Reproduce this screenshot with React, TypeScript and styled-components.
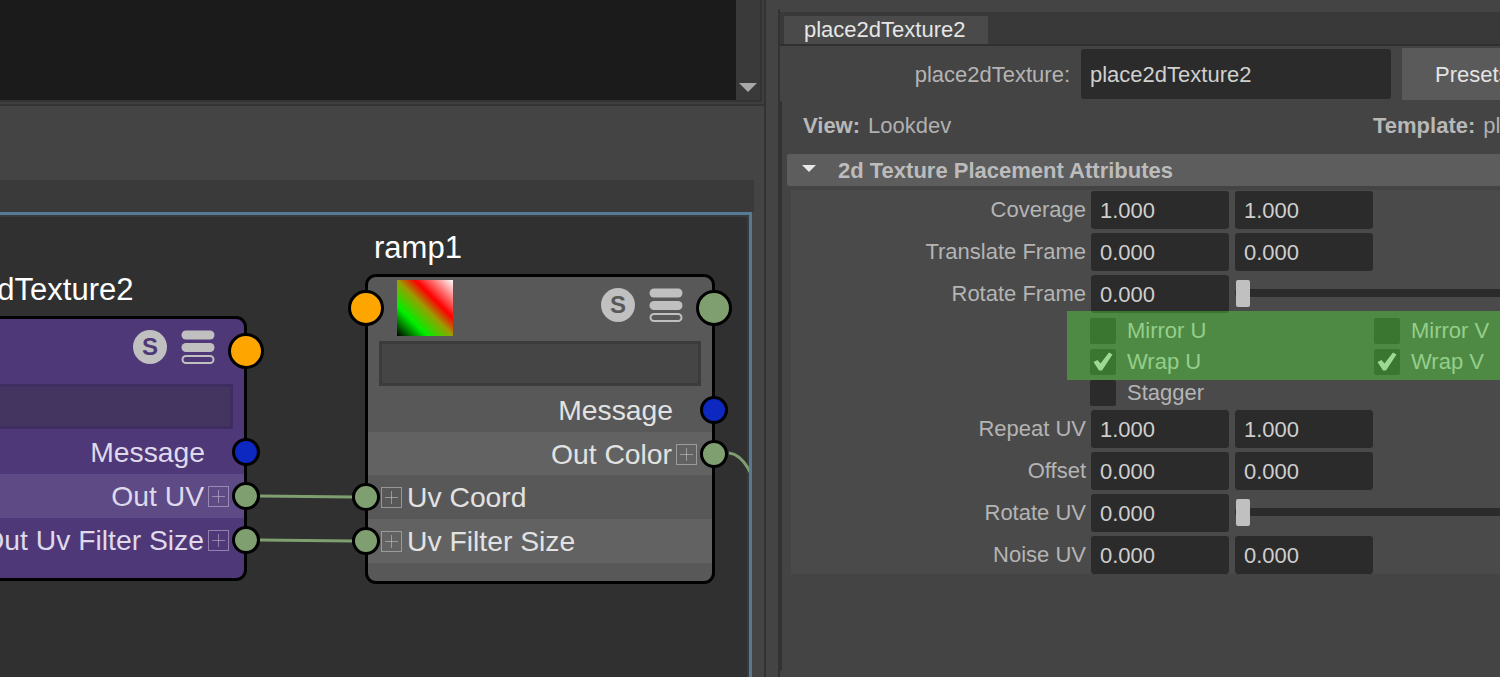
import React from 'react';
import styled, { createGlobalStyle } from 'styled-components';

const GlobalStyle = createGlobalStyle`
  html, body {
    margin: 0;
    padding: 0;
    background: #444444;
    overflow: hidden;
  }
  * {
    box-sizing: border-box;
  }
`;

const Page = styled.div`
  display: flex;
  width: 1500px;
  height: 677px;
  overflow: hidden;
  background: #444444;
  font-family: 'Liberation Sans', Arial, sans-serif;
`;

/* left side: console + node editor */

const LeftPane = styled.div`
  display: flex;
  flex-direction: column;
  flex: none;
  width: 766px;
  border-right: 2px solid #333333;
`;

const Console = styled.div`
  flex: none;
  height: 106px;
  border-bottom: 2px solid #333333;
  background: #3f3f3f;
`;

const ConsoleFrame = styled.div`
  display: flex;
  width: 762px;
  height: 102px;
  border-right: 2px solid #333333;
  border-bottom: 2px solid #333333;
`;

const ConsoleOutput = styled.div`
  width: 736px;
  background: #1b1b1b;
`;

const ScrollBar = styled.div`
  display: flex;
  align-items: flex-end;
  justify-content: center;
  width: 24px;
  padding: 0 1px 8px 0;
  background: #3a3a3a;
`;

const ScrollArrow = styled.div`
  width: 0;
  height: 0;
  border-left: 9px solid transparent;
  border-right: 9px solid transparent;
  border-top: 9px solid #a8a8a8;
`;

const EditorToolbar = styled.div`
  flex: none;
  height: 74px;
  background: #444444;
`;

const GraphFrame = styled.div`
  flex: 1;
  width: 754px;
  padding-top: 32px;
  padding-right: 2px;
  background: linear-gradient(#3a3a3a 32px, #444444 32px);
`;

const Canvas = styled.div`
  position: relative;
  width: 752px;
  height: 100%;
  overflow: hidden;
  background: #303030;
  border-top: 3px solid #557a96;
  border-right: 3px solid #557a96;
  box-shadow: inset -2px 2px 0 #3a3a3a;
`;

const Wires = styled.svg`
  position: absolute;
  top: 0;
  left: 0;
`;

const Node = styled.div<{ $x: number; $y: number; $h: number; $purple?: boolean }>`
  position: absolute;
  left: ${(p) => p.$x}px;
  top: ${(p) => p.$y}px;
  width: 350px;
  height: ${(p) => p.$h}px;
  border: 3px solid #000000;
  border-radius: 11px;
  background: ${(p) => (p.$purple ? '#4f3877' : '#585858')};
  color: ${(p) => (p.$purple ? '#dfd9ec' : '#e2e2e2')};
`;

const NodeTitle = styled.div`
  position: absolute;
  left: 6px;
  bottom: calc(100% + 11px);
  font-size: 31px;
  line-height: 36px;
  color: #ffffff;
  white-space: nowrap;
`;

const NodeHeader = styled.div<{ $h: number }>`
  position: relative;
  display: flex;
  align-items: flex-start;
  height: ${(p) => p.$h}px;
  padding: 3px 29px 0 29px;
`;

const Thumb = styled.div`
  width: 56px;
  height: 56px;
  background: linear-gradient(45deg, #000000 0%, #00f000 27%, #98a000 50%, #ff0000 66%, #ffffff 100%);
`;

const HeaderIcons = styled.div`
  display: flex;
  align-items: center;
  gap: 14px;
  margin-left: auto;
  margin-top: 8px;
`;

const ShaderBadge = styled.div<{ $purple?: boolean }>`
  display: flex;
  align-items: center;
  justify-content: center;
  width: 34px;
  height: 34px;
  border-radius: 50%;
  background: #c0c0c0;
  color: ${(p) => (p.$purple ? '#4f3877' : '#585858')};
  font-size: 24px;
  font-weight: 700;
`;

const NodeField = styled.div<{ $purple?: boolean }>`
  height: 45px;
  margin: 0 11px;
  border: 3px solid ${(p) => (p.$purple ? '#3e2d60' : '#3c3c3c')};
  background: ${(p) => (p.$purple ? '#43355f' : '#454545')};
`;

const AttrRow = styled.div<{ $h: number; $band?: string; $input?: boolean }>`
  position: relative;
  display: flex;
  align-items: center;
  justify-content: ${(p) => (p.$input ? 'flex-start' : 'flex-end')};
  gap: ${(p) => (p.$input ? 5 : 4)}px;
  height: ${(p) => p.$h}px;
  padding: ${(p) => (p.$input ? '1px 0 0 13px' : '1px 15px 0 0')};
  background: ${(p) => p.$band || 'transparent'};
  font-size: 28.3px;
  white-space: nowrap;
`;

const Port = styled.div<{ $color: string; $size: number; $side: 'left' | 'right'; $top?: number }>`
  position: absolute;
  z-index: 2;
  ${(p) => p.$side}: -2px;
  top: ${(p) => (p.$top !== undefined ? `${p.$top}px` : '50%')};
  width: ${(p) => p.$size}px;
  height: ${(p) => p.$size}px;
  margin-top: ${(p) => -p.$size / 2}px;
  margin-${(p) => p.$side}: ${(p) => -p.$size / 2}px;
  border: 3.5px solid #000000;
  border-radius: 50%;
  background: ${(p) => p.$color};
`;

const NoPortLabel = styled.span`
  margin-right: 24px;
  padding-top: 1px;
`;

/* right side: attribute editor */

const RightPane = styled.div`
  flex: 1;
  min-width: 0;
  padding-left: 12px;
  overflow: hidden;
`;

const EditorBody = styled.div`
  height: 668px;
  margin-top: 9px;
  padding-top: 3px;
  border-left: 2px solid #333333;
  font-size: 22px;
`;

const TabBar = styled.div`
  height: 34px;
  padding: 4px 0 0 4px;
  background: #393939;
  border-bottom: 2px solid #303030;
`;

const Tab = styled.div`
  display: flex;
  align-items: center;
  width: 204px;
  height: 28px;
  padding-left: 20px;
  background: #4a4a4a;
  color: #e6e6e6;
`;

const NameRow = styled.div`
  display: flex;
  align-items: center;
  gap: 11px;
  height: 55px;
`;

const NameLabel = styled.div`
  flex: none;
  width: 290px;
  padding-top: 2px;
  text-align: right;
  color: #b4b4b4;
`;

const NameInput = styled.div`
  display: flex;
  align-items: center;
  flex: none;
  width: 310px;
  height: 50px;
  padding: 2px 0 0 9px;
  border-radius: 3px;
  background: #2b2b2b;
  color: #d0d0d0;
`;

const PresetsButton = styled.div`
  display: flex;
  align-items: center;
  flex: none;
  width: 120px;
  height: 52px;
  padding: 2px 0 0 33px;
  background: #5a5a5a;
  color: #e4e4e4;
`;

const LowerPanel = styled.div`
  height: 570px;
  border-left: 2px solid #333333;
`;

const ViewRow = styled.div`
  display: flex;
  align-items: center;
  height: 53px;
  padding: 0 0 3px 21px;
  color: #b0b0b0;
  white-space: nowrap;
`;

const ViewGroup = styled.div<{ $w?: number }>`
  flex: none;
  width: ${(p) => (p.$w ? `${p.$w}px` : 'auto')};
`;

const Bold = styled.b`
  margin-right: 8px;
  color: #b8b8b8;
`;

const SectionHeader = styled.div`
  display: flex;
  align-items: center;
  height: 32px;
  margin-left: 5px;
  padding: 1px 0 0 15px;
  border-radius: 2px 0 0 2px;
  background: #5d5d5d;
  color: #bcbcbc;
  font-weight: 700;
`;

const SectionArrow = styled.div`
  flex: none;
  width: 0;
  height: 0;
  margin: -4px 22px 0 0;
  border-left: 7px solid transparent;
  border-right: 7px solid transparent;
  border-top: 7px solid #e8e8e8;
`;

const AttrArea = styled.div`
  margin: 4px 0 0 9px;
  padding-top: 1px;
  height: 384px;
  background: #4a4a4a;
`;

const FieldRow = styled.div`
  display: flex;
  align-items: center;
  gap: 6px;
  height: 38px;
  margin-bottom: 4px;
`;

const RowLabel = styled.div`
  flex: none;
  width: 295px;
  margin-right: -1px;
  text-align: right;
  color: #b4b4b4;
`;

const NumField = styled.div`
  display: flex;
  align-items: center;
  flex: none;
  width: 138px;
  height: 38px;
  padding: 1px 0 0 9px;
  border-radius: 3px;
  background: #2b2b2b;
  color: #cfcfcf;
`;

const SliderTrack = styled.div`
  position: relative;
  flex: none;
  width: 300px;
  height: 8px;
  margin-top: -2px;
  border-radius: 4px;
  background: #2b2b2b;
`;

const SliderHandle = styled.div`
  position: absolute;
  left: 1px;
  top: -9px;
  width: 14px;
  height: 27px;
  border-radius: 2px;
  background: #c0c0c0;
`;

const CheckGroup = styled.div`
  position: relative;
  display: flex;
  flex-direction: column;
  gap: 5px;
  margin-bottom: 5px;
  padding-left: 299px;
`;

const Highlight = styled.div`
  position: absolute;
  top: -6px;
  left: 276px;
  right: 0;
  height: 69px;
  background: rgba(91, 254, 63, 0.355);
  pointer-events: none;
`;

const CheckRow = styled.div`
  display: grid;
  grid-template-columns: 284px 1fr;
  height: 26px;
`;

const CheckItem = styled.div`
  display: flex;
  align-items: center;
  gap: 11px;
  padding-top: 1px;
  color: #b4b4b4;
`;

const CheckBox = styled.div`
  display: flex;
  align-items: center;
  justify-content: center;
  flex: none;
  width: 26px;
  height: 26px;
  margin-top: -1px;
  border-radius: 2px;
  background: #2b2b2b;
`;

const PlusBox = () => (
  <svg width="21" height="21" viewBox="0 0 21 21" style={{ flex: 'none' }}>
    <rect x="0.5" y="0.5" width="20" height="20" fill="none" stroke="currentColor" strokeOpacity="0.45" />
    <path d="M10.5 4v13M4 10.5h13" stroke="currentColor" strokeOpacity="0.45" />
  </svg>
);

const LayerStack = () => (
  <svg width="34" height="34" viewBox="0 0 34 34">
    <rect x="0.5" y="0.5" width="33" height="9" rx="4.5" fill="#c0c0c0" />
    <rect x="0.5" y="13" width="33" height="9" rx="4.5" fill="#c0c0c0" />
    <rect x="1.5" y="26" width="31" height="7" rx="3.5" fill="none" stroke="#c0c0c0" strokeWidth="2" />
  </svg>
);

const CheckMark = () => (
  <svg width="20" height="19" viewBox="0 0 20 19">
    <path d="M0.5 10L4.5 8l3 3.5L16 0.5l3.5 2L9 18.5H6z" fill="#ffffff" fillOpacity="0.72" />
  </svg>
);

const GREEN = '#7f9f70';
const ORANGE = '#ffa500';
const BLUE = '#0c28c0';

const App: React.FC = () => {
  return (
    <Page>
      <GlobalStyle />
      <LeftPane>
        <Console>
          <ConsoleFrame>
            <ConsoleOutput />
            <ScrollBar>
              <ScrollArrow />
            </ScrollBar>
          </ConsoleFrame>
        </Console>
        <EditorToolbar />
        <GraphFrame>
          <Canvas>
            <Wires width="749" height="462" viewBox="0 0 749 462">
              <g fill="none" stroke={GREEN} strokeWidth="3">
                <path d="M260 281L352 282" />
                <path d="M260 325L352 326" />
                <path d="M729 238C738 239 744 245 750 257" />
              </g>
            </Wires>

            <Node $x={-103} $y={101} $h={265} $purple>
              <NodeTitle>place2dTexture2</NodeTitle>
              <NodeHeader $h={65}>
                <HeaderIcons>
                  <ShaderBadge $purple>S</ShaderBadge>
                  <LayerStack />
                </HeaderIcons>
                <Port $color={ORANGE} $size={36} $side="right" $top={32} />
              </NodeHeader>
              <NodeField $purple />
              <AttrRow $h={45}>
                <NoPortLabel>Message</NoPortLabel>
                <Port $color={BLUE} $size={28} $side="right" />
              </AttrRow>
              <AttrRow $h={44} $band="#5e4a85">
                Out UV
                <PlusBox />
                <Port $color={GREEN} $size={28} $side="right" />
              </AttrRow>
              <AttrRow $h={44}>
                Out Uv Filter Size
                <PlusBox />
                <Port $color={GREEN} $size={28} $side="right" />
              </AttrRow>
            </Node>

            <Node $x={365} $y={59} $h={310}>
              <NodeTitle>ramp1</NodeTitle>
              <NodeHeader $h={64}>
                <Thumb />
                <HeaderIcons>
                  <ShaderBadge>S</ShaderBadge>
                  <LayerStack />
                </HeaderIcons>
                <Port $color={ORANGE} $size={36} $side="left" $top={31} />
                <Port $color={GREEN} $size={36} $side="right" $top={31} />
              </NodeHeader>
              <NodeField />
              <AttrRow $h={46}>
                <NoPortLabel>Message</NoPortLabel>
                <Port $color={BLUE} $size={28} $side="right" $top={24} />
              </AttrRow>
              <AttrRow $h={43} $band="#626262">
                Out Color
                <PlusBox />
                <Port $color={GREEN} $size={28} $side="right" />
              </AttrRow>
              <AttrRow $h={44} $input>
                <PlusBox />
                Uv Coord
                <Port $color={GREEN} $size={28} $side="left" />
              </AttrRow>
              <AttrRow $h={44} $band="#626262" $input>
                <PlusBox />
                Uv Filter Size
                <Port $color={GREEN} $size={28} $side="left" />
              </AttrRow>
            </Node>
          </Canvas>
        </GraphFrame>
      </LeftPane>

      <RightPane>
        <EditorBody>
          <TabBar>
            <Tab>place2dTexture2</Tab>
          </TabBar>
          <NameRow>
            <NameLabel>place2dTexture:</NameLabel>
            <NameInput>place2dTexture2</NameInput>
            <PresetsButton>Presets</PresetsButton>
          </NameRow>
          <LowerPanel>
            <ViewRow>
              <ViewGroup $w={570}>
                <Bold>View:</Bold>Lookdev
              </ViewGroup>
              <ViewGroup>
                <Bold>Template:</Bold>place2dTexture
              </ViewGroup>
            </ViewRow>
            <SectionHeader>
              <SectionArrow />
              2d Texture Placement Attributes
            </SectionHeader>
            <AttrArea>
              <FieldRow>
                <RowLabel>Coverage</RowLabel>
                <NumField>1.000</NumField>
                <NumField>1.000</NumField>
              </FieldRow>
              <FieldRow>
                <RowLabel>Translate Frame</RowLabel>
                <NumField>0.000</NumField>
                <NumField>0.000</NumField>
              </FieldRow>
              <FieldRow>
                <RowLabel>Rotate Frame</RowLabel>
                <NumField>0.000</NumField>
                <SliderTrack>
                  <SliderHandle />
                </SliderTrack>
              </FieldRow>
              <CheckGroup>
                <CheckRow>
                  <CheckItem>
                    <CheckBox />
                    Mirror U
                  </CheckItem>
                  <CheckItem>
                    <CheckBox />
                    Mirror V
                  </CheckItem>
                </CheckRow>
                <CheckRow>
                  <CheckItem>
                    <CheckBox>
                      <CheckMark />
                    </CheckBox>
                    Wrap U
                  </CheckItem>
                  <CheckItem>
                    <CheckBox>
                      <CheckMark />
                    </CheckBox>
                    Wrap V
                  </CheckItem>
                </CheckRow>
                <CheckRow>
                  <CheckItem>
                    <CheckBox />
                    Stagger
                  </CheckItem>
                </CheckRow>
                <Highlight />
              </CheckGroup>
              <FieldRow>
                <RowLabel>Repeat UV</RowLabel>
                <NumField>1.000</NumField>
                <NumField>1.000</NumField>
              </FieldRow>
              <FieldRow>
                <RowLabel>Offset</RowLabel>
                <NumField>0.000</NumField>
                <NumField>0.000</NumField>
              </FieldRow>
              <FieldRow>
                <RowLabel>Rotate UV</RowLabel>
                <NumField>0.000</NumField>
                <SliderTrack>
                  <SliderHandle />
                </SliderTrack>
              </FieldRow>
              <FieldRow>
                <RowLabel>Noise UV</RowLabel>
                <NumField>0.000</NumField>
                <NumField>0.000</NumField>
              </FieldRow>
            </AttrArea>
          </LowerPanel>
        </EditorBody>
      </RightPane>
    </Page>
  );
};

export default App;
